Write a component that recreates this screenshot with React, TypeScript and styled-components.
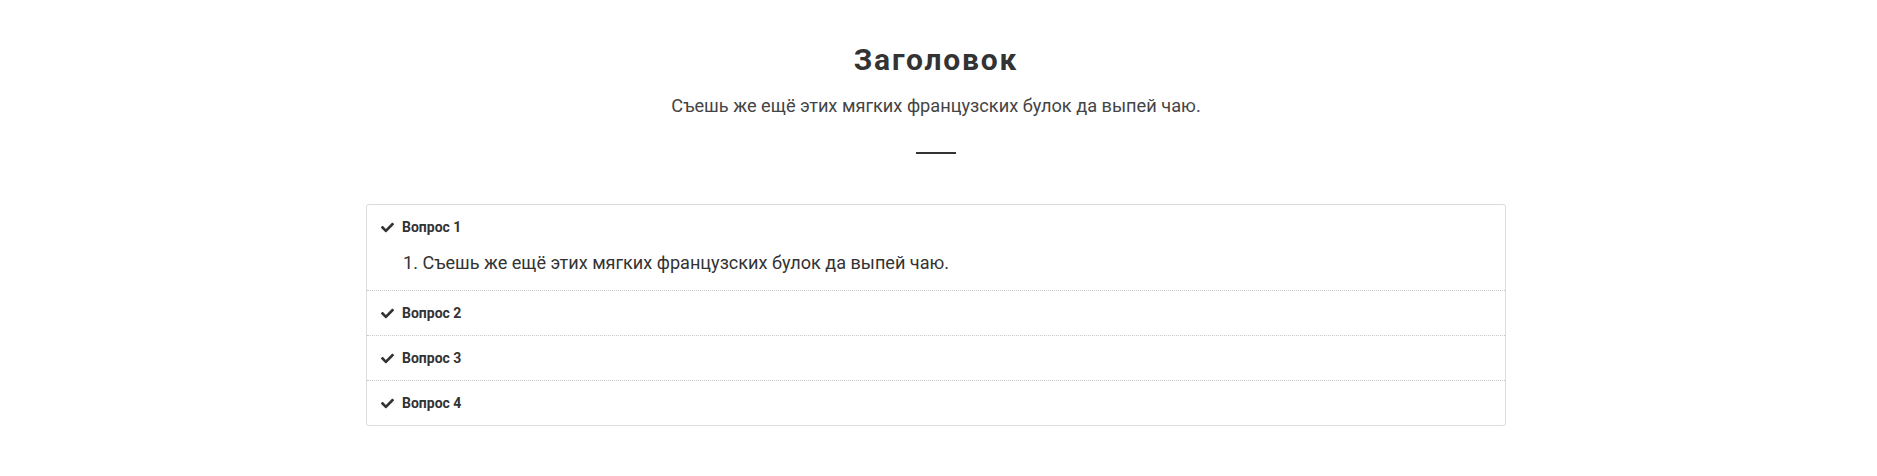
import React from "react";
import styled, { createGlobalStyle } from "styled-components";
import { FaCheck } from "react-icons/fa";

const GlobalStyle = createGlobalStyle`
  html, body { margin: 0; padding: 0; background: #fff; }
  body { font-family: Roboto, "Noto Sans", sans-serif; color: #333; }
`;

const Page = styled.div`
  padding: 34px 5px 48px 0;
  display: flex;
  flex-direction: column;
  align-items: center;
`;

const Title = styled.h2`
  margin: 0;
  font-size: 30px;
  line-height: 52px;
  font-weight: 700;
  letter-spacing: 1.8px;
  color: #333;
`;

const Subtitle = styled.p`
  margin: 7px 0 0;
  font-size: 18.2px;
  line-height: 26px;
  font-weight: 400;
  color: #444;
`;

const Rule = styled.div`
  width: 40px;
  height: 2px;
  background: #333;
  margin-top: 33px;
`;

const Accordion = styled.div`
  width: 1140px;
  box-sizing: border-box;
  margin-top: 50px;
  border: 1px solid #dcdcdc;
  border-radius: 3px;
`;

const Item = styled.div<{ $first?: boolean }>`
  border-top: ${(p) => (p.$first ? "none" : "1px dotted #c8c8c8")};
`;

const Header = styled.div`
  display: flex;
  align-items: center;
  gap: 8px;
  height: 44px;
  padding: 0 14px;
  font-size: 14px;
  font-weight: 700;
  color: #333;
`;

const Icon = styled(FaCheck)`
  width: 13px;
  height: 13px;
  color: #333;
`;

const Answer = styled.div`
  padding: 0 14px 15px 36px;
  margin-top: 2px;
  font-size: 18.1px;
  line-height: 24px;
  color: #333;
`;

const items = ["Вопрос 1", "Вопрос 2", "Вопрос 3", "Вопрос 4"];

export default function App() {
  return (
    <>
      <GlobalStyle />
      <Page>
        <Title>Заголовок</Title>
        <Subtitle>Съешь же ещё этих мягких французских булок да выпей чаю.</Subtitle>
        <Rule />
        <Accordion>
          {items.map((t, i) => (
            <Item key={t} $first={i === 0}>
              <Header>
                <Icon />
                {t}
              </Header>
              {i === 0 && (
                <Answer>1. Съешь же ещё этих мягких французских булок да выпей чаю.</Answer>
              )}
            </Item>
          ))}
        </Accordion>
      </Page>
    </>
  );
}
